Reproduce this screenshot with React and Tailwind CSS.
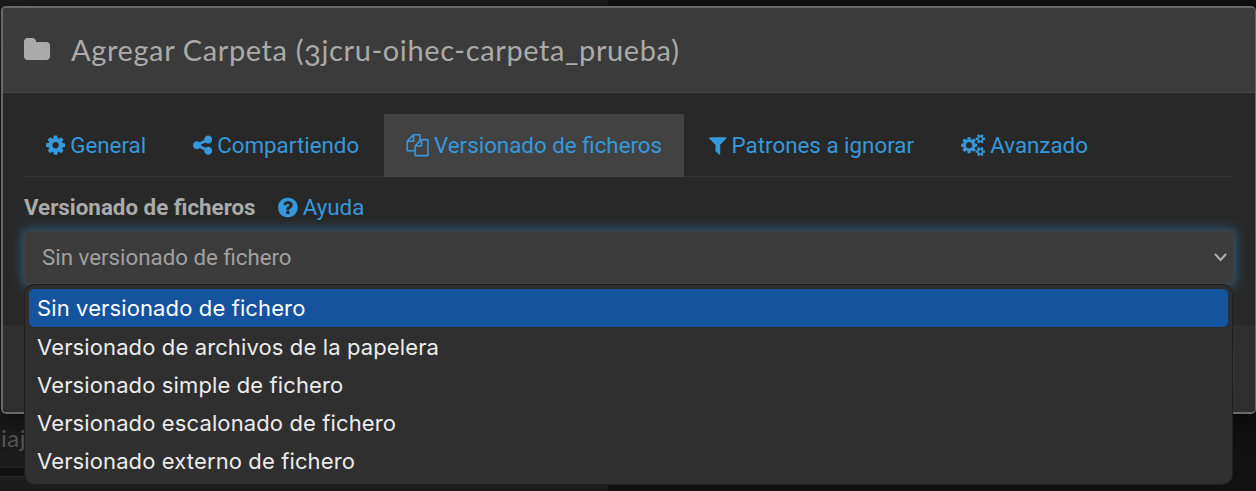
import React from "react";

const ICONS = {
  folder: [1664, "M1664 608v704q0 92-66 158t-158 66h-1216q-92 0-158-66t-66-158v-960q0-92 66-158t158-66h320q92 0 158 66t66 158v32h672q92 0 158 66t66 158z"],
  cog: [1536, "M1024 896q0-106-75-181t-181-75-181 75-75 181 75 181 181 75 181-75 75-181zm512-109v222q0 12-8 23t-20 13l-185 28q-19 54-39 91 35 50 107 138 10 12 10 25t-9 23q-27 37-99 108t-94 71q-12 0-26-9l-138-108q-44 23-91 38-16 136-29 186-7 28-36 28h-222q-14 0-24.5-8.5t-11.5-21.5l-28-184q-49-16-90-37l-141 107q-10 9-25 9-14 0-25-11-126-114-165-168-7-10-7-23 0-12 8-23 15-21 51-66.5t54-70.5q-27-50-41-99l-183-27q-13-2-21-12.5t-8-23.5v-222q0-12 8-23t19-13l186-28q14-46 39-92-40-57-107-138-10-12-10-24 0-10 9-23 26-36 98.5-107.5t94.5-71.5q13 0 26 10l138 107q44-23 91-38 16-136 29-186 7-28 36-28h222q14 0 24.5 8.5t11.5 21.5l28 184q49 16 90 37l142-107q9-9 24-9 13 0 25 10 129 119 165 170 7 8 7 22 0 12-8 23-15 21-51 66.5t-54 70.5q26 50 41 98l183 28q13 2 21 12.5t8 23.5z"],
  share: [1536, "M1216 1024q133 0 226.5 93.5t93.5 226.5-93.5 226.5-226.5 93.5-226.5-93.5-93.5-226.5q0-12 2-34l-360-180q-92 86-218 86-133 0-226.5-93.5t-93.5-226.5 93.5-226.5 226.5-93.5q126 0 218 86l360-180q-2-22-2-34 0-133 93.5-226.5t226.5-93.5 226.5 93.5 93.5 226.5-93.5 226.5-226.5 93.5q-126 0-218-86l-360 180q2 22 2 34t-2 34l360 180q92-86 218-86z"],
  files: [1792, "M1696 384q40 0 68 28t28 68v1216q0 40-28 68t-68 28h-960q-40 0-68-28t-28-68v-288h-544q-40 0-68-28t-28-68v-672q0-40 20-88t48-76l408-408q28-28 76-48t88-20h416q40 0 68 28t28 68v328q68-40 128-40h416zm-544 213l-299 299h299v-299zm-640-384l-299 299h299v-299zm196 647l316-316v-416h-384v416q0 40-28 68t-68 28h-416v640h512v-256q0-40 20-88t48-76zm956 804v-1152h-384v416q0 40-28 68t-68 28h-416v640h896z"],
  filter: [1408, "M1403 295q17 41-14 70l-493 493v742q0 42-39 59-13 5-25 5-27 0-45-19l-256-256q-19-19-19-45v-486l-493-493q-31-29-14-70 17-39 59-39h1280q42 0 59 39z"],
  cogs: [1920, "M896 896q0-106-75-181t-181-75-181 75-75 181 75 181 181 75 181-75 75-181zm768 512q0-52-38-90t-90-38-90 38-38 90q0 53 37.5 90.5t90.5 37.5 90.5-37.5 37.5-90.5zm0-1024q0-52-38-90t-90-38-90 38-38 90q0 53 37.5 90.5t90.5 37.5 90.5-37.5 37.5-90.5zm-384 421v185q0 10-7 19.5t-16 10.5l-155 24q-11 35-32 76 34 48 90 115 7 11 7 20 0 12-7 19-23 30-82.5 89.5t-78.5 59.5q-11 0-21-7l-115-90q-37 19-77 31-11 108-23 155-7 24-30 24h-186q-11 0-20-7.5t-10-17.5l-23-153q-34-10-75-31l-118 89q-7 7-20 7-11 0-21-8-144-133-144-160 0-9 7-19 10-14 41-53t47-61q-23-44-35-82l-152-24q-10-1-17-9.5t-7-19.5v-185q0-10 7-19.5t16-10.5l155-24q11-35 32-76-34-48-90-115-7-11-7-20 0-12 7-20 22-30 82-89t79-59q11 0 21 7l115 90q34-18 77-32 11-108 23-154 7-24 30-24h186q11 0 20 7.5t10 17.5l23 153q34 10 75 31l118-89q8-7 20-7 11 0 21 8 144 133 144 160 0 8-7 19-12 16-42 54t-45 60q23 48 34 82l152 23q10 2 17 10.5t7 19.5zm640 533v140q0 16-149 31-12 27-30 52 51 113 51 138 0 4-4 7-122 71-124 71-8 0-46-47t-52-68q-20 2-30 2t-30-2q-14 21-52 68t-46 47q-2 0-124-71-4-3-4-7 0-25 51-138-18-25-30-52-149-15-149-31v-140q0-16 149-31 13-29 30-52-51-113-51-138 0-4 4-7 4-2 35-20t59-34 30-16q8 0 46 46.5t52 67.5q20-2 30-2t30 2q51-71 92-112l6-2q4 0 124 70 4 3 4 7 0 25-51 138 17 23 30 52 149 15 149 31zm0-1024v140q0 16-149 31-12 27-30 52 51 113 51 138 0 4-4 7-122 71-124 71-8 0-46-47t-52-68q-20 2-30 2t-30-2q-14 21-52 68t-46 47q-2 0-124-71-4-3-4-7 0-25 51-138-18-25-30-52-149-15-149-31v-140q0-16 149-31 13-29 30-52-51-113-51-138 0-4 4-7 4-2 35-20t59-34 30-16q8 0 46 46.5t52 67.5q20-2 30-2t30 2q51-71 92-112l6-2q4 0 124 70 4 3 4 7 0 25-51 138 17 23 30 52 149 15 149 31z"],
  question: [1536, "M896 1376v-192q0-14-9-23t-23-9h-192q-14 0-23 9t-9 23v192q0 14 9 23t23 9h192q14 0 23-9t9-23zm256-672q0-88-55.5-163t-138.5-116-170-41q-243 0-371 213-15 24 8 42l132 100q7 6 19 6 16 0 25-12 53-68 86-92 34-24 86-24 48 0 85.5 26t37.5 59q0 38-20 61t-68 45q-63 28-115.5 86.5t-52.5 125.5v36q0 14 9 23t23 9h192q14 0 23-9t9-23q0-19 21.5-49.5t54.5-49.5q32-18 49-28.5t46-35 44.5-48 28-60.5 12.5-81zm384 192q0 209-103 385.5t-279.5 279.5-385.5 103-385.5-103-279.5-279.5-103-385.5 103-385.5 279.5-279.5 385.5-103 385.5 103 279.5 279.5 103 385.5z"],
};

function Icon({ name, className }) {
  const [width, path] = ICONS[name];
  return (
    <svg viewBox={`0 0 ${width} 1792`} fill="currentColor" className={`shrink-0 ${className}`} aria-hidden="true">
      <path d={path} />
    </svg>
  );
}

const TABS = [
  { icon: "cog", label: "General", box: "w-[147px]", size: "w-[19.2px]" },
  { icon: "share", label: "Compartiendo", box: "w-[213px]", size: "w-[19.2px]" },
  { icon: "files", label: "Versionado de ficheros", box: "w-[300px]", size: "w-[23px]", active: true },
  { icon: "filter", label: "Patrones a ignorar", box: "w-[252px]", size: "w-[17.6px]" },
  { icon: "cogs", label: "Avanzado", box: "w-[170px]", size: "w-[24.2px]" },
];

const OPTIONS = [
  "Sin versionado de fichero",
  "Versionado de archivos de la papelera",
  "Versionado simple de fichero",
  "Versionado escalonado de fichero",
  "Versionado externo de fichero",
];

export default function App() {
  return (
    <div className="relative h-[491px] w-[1256px] overflow-hidden bg-[#111111] font-['Roboto',sans-serif]">
      <div className="flex h-full w-[608px] flex-col bg-[#1c1c1c]">
        <div className="mt-[421px] h-[46px] pl-px font-['Lato',sans-serif] text-[24px] leading-[34px] tracking-[0.5px] text-[#555555]">iaj</div>
        <div className="h-[9px] border-t border-[#222222] bg-[#111111]" />
        <div className="flex-1 border-t border-[#282828]" />
      </div>

      <section className="absolute left-px top-[6px] flex h-[408px] w-[1255px] flex-col overflow-hidden rounded-[5px] border-2 border-r border-[#696969] bg-[#282828] shadow-[0_8px_24px_rgba(0,0,0,0.6)]">
        <header className="flex h-[85px] shrink-0 items-center border-b border-[#464646] bg-[#3b3b3b] pl-[21px] text-[#aaaaaa]">
          <Icon name="folder" className="h-[28px] w-[26px]" />
          <h4 className="ml-[21px] whitespace-nowrap font-['Lato',sans-serif] text-[29px] leading-8 tracking-[0.61px]">
            Agregar Carpeta (<span className="inline-block translate-y-[5px]">3</span>jcru-oihec-carpeta_prueba)
          </h4>
        </header>
        <main className="flex-1 pl-[21px] pr-[21px] pt-[21px]">
          <nav className="flex h-[63px] w-[1210px] border-b border-[#343434]">
            {TABS.map((t) => (
              <a key={t.label} className={`flex h-[63px] shrink-0 items-center gap-[5px] whitespace-nowrap pl-[22px] text-[22.35px] text-[#3498db] ${t.box} ${t.active ? "mr-[3px] rounded-t-[2px] bg-[#424242]" : ""}`}>
                <Icon name={t.icon} className={`h-[22.4px] ${t.size}`} />
                <span>{t.label}</span>
              </a>
            ))}
          </nav>
          <div className="flex h-[54px] items-center pt-[7px] text-[22.35px]">
            <label className="w-[254px] font-bold text-[#aaaaaa]">Versionado de ficheros</label>
            <a className="flex items-center gap-[5px] text-[#3498db]">
              <Icon name="question" className="h-[23px] w-[19.7px]" />
              <span>Ayuda</span>
            </a>
          </div>
          <div className="flex h-[53px] w-[1210px] items-center justify-between rounded-[3px] border border-[#414141] bg-[#3b3b3b] pl-[17px] pr-[6px] text-[22.3px] text-[#a0a0a0] shadow-[0_0_11px_2px_rgba(52,118,165,0.65)]">
            <span>Sin versionado de fichero</span>
            <svg className="h-[9px] w-[13px]" viewBox="0 0 13 9" fill="none" stroke="#b0b0b0" strokeWidth="2" strokeLinecap="round">
              <path d="M1.5 1.5 6.5 7 11.5 1.5" />
            </svg>
          </div>
        </main>
        <footer className="flex h-[86px] shrink-0 justify-end border-t border-[#343434] bg-[#2e2e2e] pr-[21px] pt-[23px]">
          <div className="h-[39px] w-[110px] rounded-[3px] border border-[#383838]" />
        </footer>
      </section>

      <ul className="absolute left-[25px] top-[285px] h-[199px] w-[1207px] rounded-[9px] bg-[#2f2f2f] px-1 pt-1 font-['Inter',sans-serif] text-[22px] tracking-[0.12px] text-[#ececec] shadow-[0_0_0_1px_#1f1f1f]">
        {OPTIONS.map((o, i) => (
          <li key={o} className={`flex h-[38px] items-center rounded-[5px] pl-2 ${i === 0 ? "bg-[#15539e] text-white" : "pt-[2px]"}`}>
            {o}
          </li>
        ))}
      </ul>
    </div>
  );
}
